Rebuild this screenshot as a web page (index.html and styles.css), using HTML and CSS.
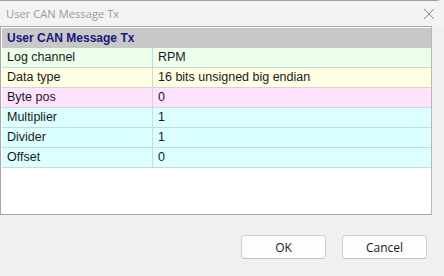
FILE: index.html
```html
<!DOCTYPE html>
<html lang="en">
  <head>
    <meta charset="UTF-8" />
    <title>User CAN Message Tx</title>
    <link rel="stylesheet" href="styles.css">
  </head>
  <body>
    <div class="window">
      <div class="titlebar">
        <span class="title">User CAN Message Tx</span>
        <svg class="close" width="12" height="12" viewBox="0 0 12 12">
          <path d="M1 1 L11 11 M11 1 L1 11" stroke="#8a8a8a" stroke-width="1" fill="none" />
        </svg>
      </div>

      <div class="grid">
        <div class="head">User CAN Message Tx</div>
        <div class="row green">
          <div class="key">Log channel</div>
          <div class="val">RPM</div>
        </div>
        <div class="row yellow">
          <div class="key">Data type</div>
          <div class="val">16 bits unsigned big endian</div>
        </div>
        <div class="row pink">
          <div class="key">Byte pos</div>
          <div class="val">0</div>
        </div>
        <div class="row cyan">
          <div class="key">Multiplier</div>
          <div class="val">1</div>
        </div>
        <div class="row cyan">
          <div class="key">Divider</div>
          <div class="val">1</div>
        </div>
        <div class="row cyan">
          <div class="key">Offset</div>
          <div class="val">0</div>
        </div>
      </div>

      <div class="buttons">
        <button class="btn">OK</button>
        <button class="btn">Cancel</button>
      </div>
    </div>
  </body>
</html>
```

FILE: styles.css
```css
html, body {
  margin: 0;
  padding: 0;
}

body {
  width: 444px;
  height: 276px;
  background-color: #f0f0f0;
  overflow: hidden;
}

.window {
  height: 276px;
  display: flex;
  flex-direction: column;
  background-color: #f0f0f0;
  border-top: 1px solid #a0a0a0;
  border-top-right-radius: 8px;
  box-sizing: border-box;
}

.titlebar {
  height: 25px;
  display: flex;
  align-items: center;
  justify-content: space-between;
  padding: 0 9px 0 6px;
  background-color: #f3f3f3;
}

.titlebar .title {
  font-family: "Open Sans", "Noto Sans", sans-serif;
  font-size: 11.2px;
  color: #9a9a9a;
}

.titlebar .close {
  margin-top: 1px;
}

.grid {
  width: 432px;
  height: 189px;
  box-sizing: border-box;
  border: 1px solid #a8a8a8;
  border-right-color: #b8b8b8;
  background-color: #fff;
  padding: 1px 0 0 1px;
  font-family: "Liberation Sans", Arial, sans-serif;
  font-size: 12.5px;
  color: #1a1a1a;
}

.grid .head {
  height: 20px;
  line-height: 20px;
  padding-left: 5px;
  background-color: #c8c8c8;
  color: #18187a;
  font-weight: bold;
  font-size: 12px;
}

.grid .row {
  display: flex;
  height: 20px;
  border-bottom: 1px solid #c8d8dc;
  box-sizing: border-box;
}

.grid .row .key {
  width: 151px;
  padding-left: 5px;
  line-height: 19px;
  border-right: 1px solid #c8d8dc;
  box-sizing: border-box;
}

.grid .row .val {
  flex: 1;
  padding-left: 5px;
  line-height: 19px;
}

.green {
  background-color: #ebffeb;
}
.yellow {
  background-color: #ffffe3;
}
.pink {
  background-color: #ffe3ff;
}
.cyan {
  background-color: #dcffff;
}

.buttons {
  display: flex;
  justify-content: flex-end;
  gap: 16px;
  padding: 20px 17px 0 0;
}

.btn {
  width: 85px;
  height: 24px;
  background-color: #fdfdfd;
  border: 1px solid #d0d0d0;
  border-bottom-color: #c0c0c0;
  border-radius: 4px;
  font-family: "Open Sans", "Noto Sans", sans-serif;
  font-size: 12px;
  color: #1a1a1a;
}
```
